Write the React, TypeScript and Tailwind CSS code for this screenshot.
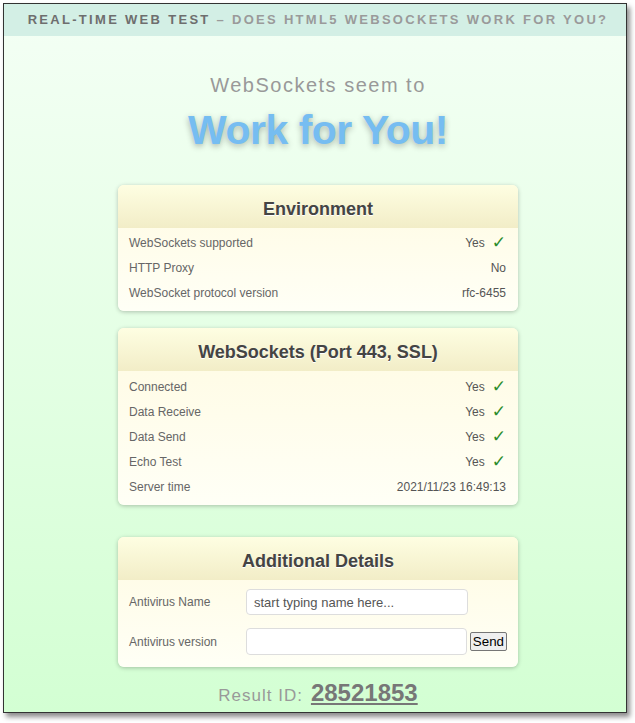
const font = { fontFamily: '"Liberation Sans", Arial, sans-serif' };

function Check() {
  return (
    <span className="ml-[7px] text-[17px] leading-none text-[#2c8c2c]" style={{ fontFamily: '"DejaVu Sans", sans-serif' }}>
      ✓
    </span>
  );
}

function Card({ title, children }: { title: string; children: React.ReactNode }) {
  return (
    <div className="w-[400px] rounded-[6px] bg-linear-to-b from-[#fffbe2] to-[#fffff6] shadow-[0_1px_4px_rgba(0,0,0,0.25)] overflow-hidden">
      <div className="h-[43px] pt-[5px] flex items-center justify-center bg-linear-to-b from-[#fefee2] to-[#f2edc7] text-[18px] font-bold text-[#444] [text-shadow:0_1px_0_#fff]">
        {title}
      </div>
      {children}
    </div>
  );
}

function Row({ label, value, ok }: { label: string; value: string; ok?: boolean }) {
  return (
    <div className="h-[25px] flex items-center justify-between pl-[11px] pr-[12px] text-[12px]">
      <span className="text-[#666]">{label}</span>
      <span className="flex items-center text-[#555]">
        {value}
        {ok && <Check />}
      </span>
    </div>
  );
}

export default function App() {
  return (
    <div className="w-[635px] h-[723px] bg-white pt-[3px] pl-[3px]" style={font}>
      <div className="w-[624px] h-[710px] border border-[#333] shadow-[3px_4px_5px_rgba(0,0,0,0.45)] bg-linear-to-b from-[#f4fff5] to-[#d3ffd3] flex flex-col">
        <div className="h-[32px] shrink-0 bg-[#d3efe5] flex items-center justify-center pl-[6px] text-[13px] font-bold tracking-[2.3px] uppercase">
          <span className="text-[#6e6e6e]">Real-Time Web Test</span>
          <span className="text-[#9a9a9a]">&nbsp;– Does HTML5 WebSockets Work for You?</span>
        </div>
        <div className="flex flex-col items-center pl-[6px]">
          <div className="mt-[37px] text-[20px] leading-[24px] tracking-[1.5px] text-[#999]">WebSockets seem to</div>
          <div className="mt-[9px] text-[41px] leading-[48px] font-bold tracking-[-0.5px] text-[#76bdf1] [text-shadow:0_2px_6px_rgba(0,0,0,0.3)]">
            Work for You!
          </div>
          <div className="mt-[31px]">
            <Card title="Environment">
              <div className="pt-[2px] pb-[6px]">
                <Row label="WebSockets supported" value="Yes" ok />
                <Row label="HTTP Proxy" value="No" />
                <Row label="WebSocket protocol version" value="rfc-6455" />
              </div>
            </Card>
          </div>
          <div className="mt-[17px]">
            <Card title="WebSockets (Port 443, SSL)">
              <div className="pt-[3px] pb-[6px]">
                <Row label="Connected" value="Yes" ok />
                <Row label="Data Receive" value="Yes" ok />
                <Row label="Data Send" value="Yes" ok />
                <Row label="Echo Test" value="Yes" ok />
                <Row label="Server time" value="2021/11/23 16:49:13" />
              </div>
            </Card>
          </div>
          <div className="mt-[32px]">
            <Card title="Additional Details">
              <div className="pt-[9px] pb-[12px] pl-[11px] pr-[11px] flex flex-col gap-[13px] text-[12px] text-[#666]">
                <div className="flex items-center">
                  <span className="w-[117px]">Antivirus Name</span>
                  <input
                    className="w-[222px] h-[26px] rounded-[4px] border border-[#ddd] bg-white px-[7px] text-[13px] text-[#555] placeholder:text-[#555] outline-none"
                    style={font}
                    placeholder="start typing name here..."
                  />
                </div>
                <div className="flex items-center">
                  <span className="w-[117px]">Antivirus version</span>
                  <input
                    className="w-[222px] h-[27px] rounded-[4px] border border-[#ddd] bg-white px-[7px] text-[13px] text-[#555] outline-none"
                    style={font}
                  />
                  <button
                    className="ml-[3px] h-[19px] px-[2px] rounded-[2px] border border-[#767676] bg-[#efefef] text-[13.33px] leading-[15px] text-black"
                    style={font}
                  >
                    Send
                  </button>
                </div>
              </div>
            </Card>
          </div>
          <div className="mt-[12px] h-[28px] flex items-baseline gap-[8px]">
            <span className="text-[17px] tracking-[1px] text-[#999]">Result ID:</span>
            <span className="text-[24px] leading-[28px] font-bold text-[#777] underline">28521853</span>
          </div>
        </div>
      </div>
    </div>
  );
}
